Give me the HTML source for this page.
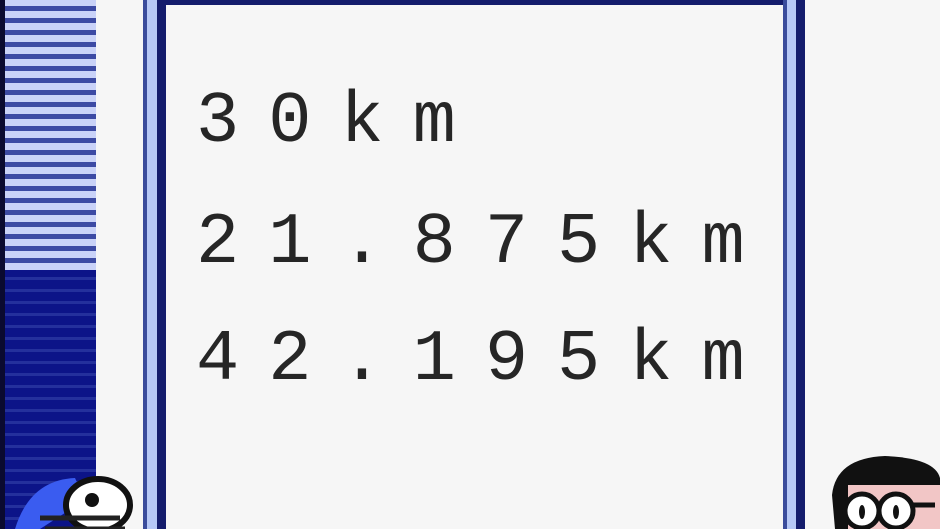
<!DOCTYPE html>
<html><head><meta charset="utf-8"><style>
html,body{margin:0;padding:0;width:940px;height:529px;overflow:hidden;background:#f6f6f6;position:relative}
.d{position:absolute}
</style></head><body>
<div class="d" style="left:0;top:0;width:6px;height:529px;background:#0a0a30"></div>
<div class="d" style="left:5px;top:0;width:91px;height:270px;background:repeating-linear-gradient(#c9d2f8 0 6px,#3c4aa4 6px 11px,#c9d2f8 11px 12px)"></div>
<div class="d" style="left:5px;top:270px;width:91px;height:259px;background:repeating-linear-gradient(#0c1488 0 7px,#24309c 7px 10px,#0c1488 10px 12px)"></div>
<div class="d" style="left:143px;top:0;width:4px;height:529px;background:#3a4c9c"></div>
<div class="d" style="left:147px;top:0;width:10px;height:529px;background:#b6c8f6"></div>
<div class="d" style="left:157px;top:0;width:9px;height:529px;background:#141c6c"></div>
<div class="d" style="left:166px;top:0;width:620px;height:5px;background:#141c6c"></div>
<div class="d" style="left:783px;top:0;width:4px;height:529px;background:#3a4c9c"></div>
<div class="d" style="left:787px;top:0;width:9px;height:529px;background:#b6c8f6"></div>
<div class="d" style="left:796px;top:0;width:9px;height:529px;background:#141c6c"></div>
<svg class="d" style="left:0;top:0" width="940" height="529">
<g font-family="Liberation Mono, monospace" font-size="72" fill="#262626" letter-spacing="29">
<text x="196" y="141">30km</text>
<text x="196" y="262">21.875km</text>
<text x="196" y="379">42.195km</text>
</g>
<path d="M15 529 Q30 480 75 478 L85 500 L40 529Z" fill="#3a5cf0"/>
<ellipse cx="98" cy="505" rx="32" ry="26" fill="#fff" stroke="#111" stroke-width="6"/>
<circle cx="92" cy="500" r="7" fill="#111"/>
<path d="M40 518 H120 M45 529 H125" stroke="#222" stroke-width="5"/>
<path d="M832 495 Q836 458 885 456 Q935 458 940 478 V529 H835Z" fill="#111"/>
<rect x="848" y="485" width="92" height="44" fill="#f2c6c6"/>
<ellipse cx="862" cy="511" rx="17" ry="17" fill="#fff" stroke="#111" stroke-width="5"/>
<ellipse cx="896" cy="511" rx="17" ry="17" fill="#fff" stroke="#111" stroke-width="5"/>
<ellipse cx="862" cy="512" rx="3" ry="7" fill="#111"/>
<ellipse cx="896" cy="512" rx="3" ry="7" fill="#111"/>
<path d="M913 505 H935" stroke="#111" stroke-width="5"/>
</svg>
</body></html>
